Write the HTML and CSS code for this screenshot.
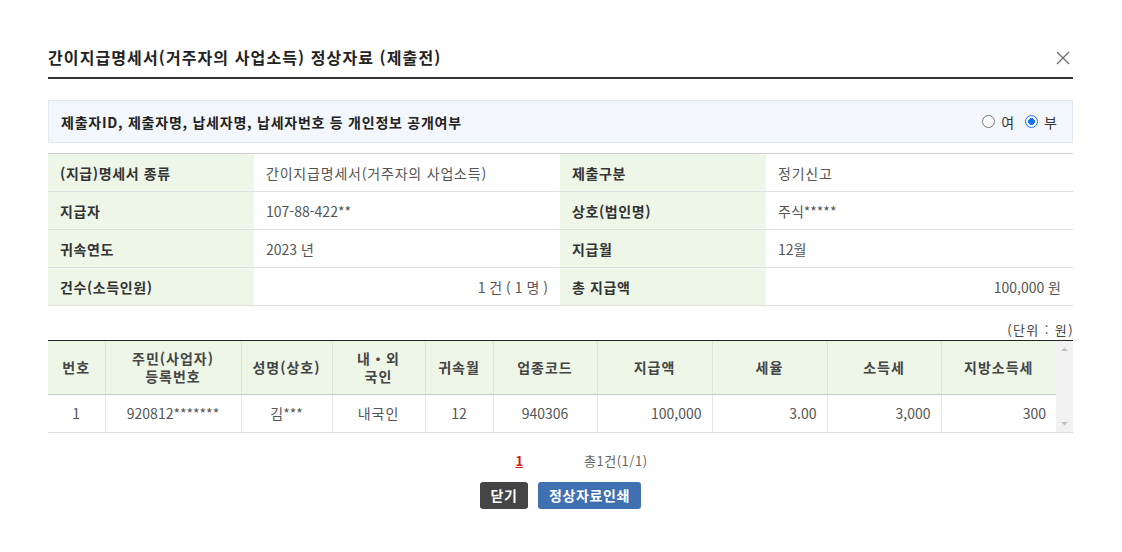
FILE: index.html
```html
<!DOCTYPE html>
<html lang="ko">
<head>
<meta charset="utf-8">
<link rel="stylesheet" href="styles.css">
</head>
<body>
<div class="wrap">
  <div class="head">
    <h1 class="title">간이지급명세서(거주자의 사업소득) 정상자료 (제출전)</h1>
    <svg class="close" width="14" height="14" viewBox="0 0 14 14"><path d="M1 1L13 13M13 1L1 13" stroke="#666" stroke-width="1.2" fill="none"/></svg>
  </div>

  <div class="notice">
    <span class="notice-text">제출자ID, 제출자명, 납세자명, 납세자번호 등 개인정보 공개여부</span>
    <div class="radios">
      <span class="radio"></span><span class="rlabel">여</span>
      <span class="radio on"></span><span class="rlabel">부</span>
    </div>
  </div>

  <table class="info">
    <colgroup><col class="c1"><col class="c2"><col class="c3"><col class="c4"></colgroup>
    <tr><th>(지급)명세서 종류</th><td class="ko">간이지급명세서(거주자의 사업소득)</td><th>제출구분</th><td class="ko">정기신고</td></tr>
    <tr><th>지급자</th><td>107-88-422**</td><th>상호(법인명)</th><td>주식*****</td></tr>
    <tr><th>귀속연도</th><td>2023 년</td><th>지급월</th><td>12월</td></tr>
    <tr><th>건수(소득인원)</th><td class="r">1 건 ( 1 명 )</td><th>총 지급액</th><td class="r">100,000 원</td></tr>
  </table>

  <div class="unit">(단위 : 원)</div>

  <div class="grid-wrap">
    <table class="grid">
      <colgroup>
        <col style="width:57px"><col style="width:136px"><col style="width:91px"><col style="width:93px"><col style="width:68px">
        <col style="width:104px"><col style="width:115px"><col style="width:115px"><col style="width:114px"><col style="width:115px">
      </colgroup>
      <thead>
        <tr><th>번호</th><th>주민(사업자)<br>등록번호</th><th>성명(상호)</th><th>내・외<br>국인</th><th>귀속월</th><th>업종코드</th><th>지급액</th><th>세율</th><th>소득세</th><th>지방소득세</th></tr>
      </thead>
      <tbody>
        <tr><td>1</td><td>920812*******</td><td>김***</td><td class="ko">내국인</td><td>12</td><td>940306</td><td class="r">100,000</td><td class="r">3.00</td><td class="r">3,000</td><td class="r">300</td></tr>
      </tbody>
    </table>
    <div class="sbar">
      <svg width="17" height="17" viewBox="0 0 17 17"><path d="M5 10L8.5 6.5L12 10Z" fill="#c1c1c1"/></svg>
      <svg width="17" height="17" viewBox="0 0 17 17"><path d="M5 7L8.5 10.5L12 7Z" fill="#c1c1c1"/></svg>
    </div>
  </div>

  <div class="paging">
    <span class="page">1</span>
    <span class="total">총1건(1/1)</span>
  </div>

  <div class="btns">
    <button class="btn dark">닫기</button>
    <button class="btn blue">정상자료인쇄</button>
  </div>
</div>
</body>
</html>
```
FILE: styles.css
```css
* { box-sizing: border-box; }
html, body { margin: 0; padding: 0; background: #fff; }
body {
  font-family: "Noto Sans CJK KR", "Noto Sans", sans-serif;
  font-size: 14px;
  color: #333;
}
.wrap { width: 1025px; margin-left: 48px; }

.head {
  display: flex; align-items: center; justify-content: space-between;
  height: 79px; padding-top: 37px;
  border-bottom: 2px solid #333;
}
.title { margin: 0; font-size: 16px; font-weight: bold; color: #222; letter-spacing: 1.1px; line-height: 22px; }
.close { margin-right: 3px; margin-top: 2px; }

.notice {
  margin-top: 21px; height: 43px;
  display: flex; align-items: center; justify-content: space-between;
  background: #f3f7fb; border: 1px solid #e2e8ef;
  padding: 0 15px 0 12px;
}
.notice-text { font-weight: bold; color: #222; font-size: 14px; letter-spacing: 0.75px; }
.radios { display: flex; align-items: center; }
.radio {
  width: 13px; height: 13px; border-radius: 50%;
  border: 1px solid #767676; background: #fff; display: inline-block;
  margin-right: 6px;
}
.radio.on { border: 1.5px solid #1a73e8; background: radial-gradient(circle, #1a73e8 0 3.2px, #fff 3.6px); }
.rlabel { margin-right: 11px; color: #333; }
.rlabel:last-child { margin-right: 0; }

.info {
  margin-top: 10px; width: 100%; border-collapse: collapse; table-layout: fixed;
  border-top: 1px solid #cfcfcf; border-bottom: 1px solid #cfcfcf;
}
.info .c1 { width: 206px; } .info .c2 { width: 306px; } .info .c3 { width: 206px; } .info .c4 { width: 307px; }
.info th, .info td { height: 38px; padding: 0 12px; border-bottom: 1px solid #e0e0e0; font-size: 14px; }
.info th { background: #eef6e8; text-align: left; font-weight: bold; color: #333; letter-spacing: 0.6px; }
.info td { color: #555; }
.info td.ko { letter-spacing: 0.8px; }
.info td.r { text-align: right; }

.unit { text-align: right; font-size: 13px; color: #444; margin-top: 14px; line-height: 20px; letter-spacing: 1.4px; margin-right: -1px; }

.grid-wrap { display: flex; border-top: 1px solid #222; border-bottom: 1px solid #ddd; }
.grid { width: 1008px; border-collapse: collapse; table-layout: fixed; }
.grid th {
  height: 53px; background: #eef6e8; font-weight: bold; color: #444; line-height: 18px;
  border-right: 1px solid #dde5d6; border-bottom: 1px solid #c9c9c9; font-size: 14px; letter-spacing: 1px;
}
.grid th:last-child { border-right: none; }
.grid td {
  height: 38px; text-align: center; color: #555; border-right: 1px solid #e6e6e6; padding: 0 10px;
}
.grid td.ko { letter-spacing: 1px; }
.grid td:last-child { border-right: none; }
.grid td.r { text-align: right; }
.sbar { width: 17px; background: #f1f1f1; display: flex; flex-direction: column; justify-content: space-between; }
.sbar svg { display: block; }

.paging {
  display: flex; justify-content: center; align-items: center;
  margin-top: 17px; padding-left: 42px; height: 20px;
}
.page { color: #d21a1a; font-weight: bold; text-decoration: underline; font-size: 13px; }
.total { margin-left: 61px; color: #666; font-size: 13px; letter-spacing: 0.5px; }

.btns { display: flex; justify-content: center; gap: 10px; margin-top: 12px; }
.btn {
  height: 27px; border: none; border-radius: 3px; color: #fff; font-weight: bold;
  font-family: inherit; font-size: 14px; padding: 0 6px; line-height: 27px; letter-spacing: 0.6px;
}
.btn.dark { background: #454545; width: 48px; }
.btn.blue { background: #3f70b2; width: 103px; }
```
